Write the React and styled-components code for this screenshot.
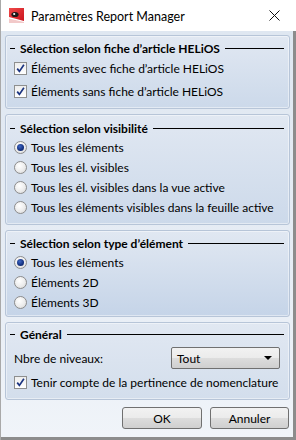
import * as React from 'react';
import styled, { createGlobalStyle } from 'styled-components';

const GlobalStyle = createGlobalStyle`
    html, body {
        margin: 0;
        padding: 0;
        background: #ffffff;
    }
    body {
        font-family: Lato, "Liberation Sans", sans-serif;
        font-size: 12px;
        color: #000000;
        white-space: nowrap;
    }
`

const Window = styled.div`
    width: 296px;
    height: 440px;
    box-sizing: border-box;
    display: flex;
    flex-direction: column;
    background: #ffffff;
    border-left: 1px solid #a9a9a9;
`

const TitleBar = styled.div`
    height: 31px;
    display: flex;
    align-items: center;
    padding: 0 0 0 8px;
    gap: 7px;
    background: #ffffff;
`

const TitleText = styled.div`
    flex: 1;
    font-size: 12.5px;
    padding-top: 1px;
`

const CloseButton = styled.div`
    width: 28px;
    height: 20px;
    display: flex;
    align-items: center;
    justify-content: center;
    margin-right: 8px;
`

const Body = styled.div`
    flex: 1;
    display: flex;
    flex-direction: column;
    gap: 5px;
    padding: 4px 3px 0 4px;
    background: linear-gradient(180deg, #dfe7f1 0%, #e7edf5 60%, #f0f4f9 100%);
    border-right: 3px solid #8c8c8c;
    border-bottom: 3px solid #8c8c8c;
`

const Panel = styled.div`
    border: 1px solid #b7c5d8;
    border-radius: 3px;
    box-shadow: inset 0 0 0 1px rgba(255, 255, 255, 0.45);
    background: linear-gradient(180deg, #e1e8f2 0%, ${p => p.$bottom || '#ccd9ea'} 100%);
    padding: ${p => p.$pad || '4px 5px 5px 4px'};
    display: flex;
    flex-direction: column;
`

const Legend = styled.div`
    height: 16px;
    display: flex;
    align-items: center;
    font-weight: 700;
    margin-bottom: 1px;
`

const Dash = styled.span`
    width: 5px;
    height: 1px;
    background: #000;
    margin: 0 5px 0 0;
`

const Rule = styled.span`
    flex: 1;
    height: 1px;
    background: #000;
    margin: 0 0 0 5px;
`

const Row = styled.label`
    height: ${p => p.$h || 20}px;
    display: flex;
    align-items: center;
    gap: 4px;
    padding-left: 4px;
`

const Box = styled.span`
    width: 11px;
    height: 11px;
    border: 1px solid #8e8f8f;
    background: linear-gradient(180deg, #eeeeee, #ffffff);
    display: flex;
    align-items: center;
    justify-content: center;
    flex-shrink: 0;
`

const Radio = styled.span`
    width: 11px;
    height: 11px;
    border-radius: 50%;
    border: 1px solid #8c8c8c;
    background: radial-gradient(circle at 40% 35%, #ffffff 0%, #ececec 55%, #d4d4d4 100%);
    display: flex;
    align-items: center;
    justify-content: center;
    flex-shrink: 0;
`

const Dot = styled.span`
    width: 7px;
    height: 7px;
    border-radius: 50%;
    background: radial-gradient(circle at 40% 35%, #3f67c4 0%, #14317f 60%, #0b215e 100%);
`

const FieldRow = styled.div`
    height: 22px;
    margin-top: 4px;
    display: flex;
    align-items: center;
    justify-content: space-between;
    padding: 0 4px 0 4px;
`

const Select = styled.div`
    width: 109px;
    height: 22px;
    box-sizing: border-box;
    border: 1px solid #707070;
    border-radius: 2px;
    background: linear-gradient(180deg, #f2f2f2 0%, #ebebeb 50%, #dddddd 51%, #cfcfcf 100%);
    display: flex;
    align-items: center;
    justify-content: space-between;
    padding: 0 7px 0 5px;
`

const Arrow = styled.span`
    width: 0;
    height: 0;
    border-left: 4px solid transparent;
    border-right: 4px solid transparent;
    border-top: 4px solid #000;
`

const Footer = styled.div`
    display: flex;
    justify-content: flex-end;
    gap: 8px;
    padding: 2px 1px 0 0;
`

const Button = styled.div`
    width: ${p => p.$w}px;
    height: 20px;
    border: 1px solid #707070;
    border-radius: 3px;
    background: linear-gradient(180deg, #f2f2f2 0%, #ebebeb 50%, #dddddd 51%, #cfcfcf 100%);
    display: flex;
    align-items: center;
    justify-content: center;
`

const Check = () => (
    <Box>
        <svg width="9" height="9" viewBox="0 0 9 9">
            <path d="M1.2 4.6 L3.4 7.4 L7.9 0.8" stroke="#1b3481" strokeWidth="1.7" fill="none" />
        </svg>
    </Box>
)

const AppIcon = () => (
    <svg width="15" height="15" viewBox="0 0 15 15">
        <defs>
            <linearGradient id="red" x1="0" y1="0" x2="1" y2="1">
                <stop offset="0" stopColor="#f04a4a" />
                <stop offset="1" stopColor="#c8101a" />
            </linearGradient>
        </defs>
        <rect x="0" y="0" width="15" height="15" fill="url(#red)" />
        <path d="M0 9 L0 15 L15 15 L15 13 Z" fill="#ffffff" />
        <path d="M0 10.5 L15 14 L15 15 L0 15 Z" fill="#f2c9c9" />
        <ellipse cx="6" cy="6.5" rx="3.6" ry="2.6" fill="#1a1a1a" />
        <circle cx="5.2" cy="6" r="1.1" fill="#ffffff" />
    </svg>
)

const CloseIcon = () => (
    <svg width="11" height="11" viewBox="0 0 11 11">
        <path d="M0.5 0.5 L10.5 10.5 M10.5 0.5 L0.5 10.5" stroke="#111" strokeWidth="1" />
    </svg>
)

const Section = ({ title, children, ...rest }) => (
    <Panel {...rest}>
        <Legend>
            <Dash />
            {title}
            <Rule />
        </Legend>
        {children}
    </Panel>
)

const RadioRow = ({ checked, label }) => (
    <Row>
        <Radio>{checked && <Dot />}</Radio>
        {label}
    </Row>
)

const App = () => {
    return (
        <>
            <GlobalStyle />
            <Window>
                <TitleBar>
                    <AppIcon />
                    <TitleText>Paramètres Report Manager</TitleText>
                    <CloseButton><CloseIcon /></CloseButton>
                </TitleBar>
                <Body>
                    <Section title="Sélection selon fiche d’article HELiOS">
                        <Row $h={23}><Check />Éléments avec fiche d’article HELiOS</Row>
                        <Row $h={23}><Check />Éléments sans fiche d’article HELiOS</Row>
                    </Section>
                    <Section title="Sélection selon visibilité" $pad="5px 5px 7px 4px">
                        <RadioRow checked label="Tous les éléments" />
                        <RadioRow label="Tous les él. visibles" />
                        <RadioRow label="Tous les él. visibles dans la vue active" />
                        <RadioRow label="Tous les éléments visibles dans la feuille active" />
                    </Section>
                    <Section title="Sélection selon type d’élément" $bottom="#c5d4e8" $pad="4px 5px 4px 4px">
                        <RadioRow checked label="Tous les éléments" />
                        <RadioRow label="Éléments 2D" />
                        <RadioRow label="Éléments 3D" />
                    </Section>
                    <Section title="Général" $bottom="#d3deec" $pad="3px 5px 4px 4px">
                        <FieldRow>
                            <span>Nbre de niveaux:</span>
                            <Select>
                                <span>Tout</span>
                                <Arrow />
                            </Select>
                        </FieldRow>
                        <Row $h={26}><Check />Tenir compte de la pertinence de nomenclature</Row>
                    </Section>
                    <Footer>
                        <Button $w={78}>OK</Button>
                        <Button $w={77}>Annuler</Button>
                    </Footer>
                </Body>
            </Window>
        </>
    )
}

export default App;
